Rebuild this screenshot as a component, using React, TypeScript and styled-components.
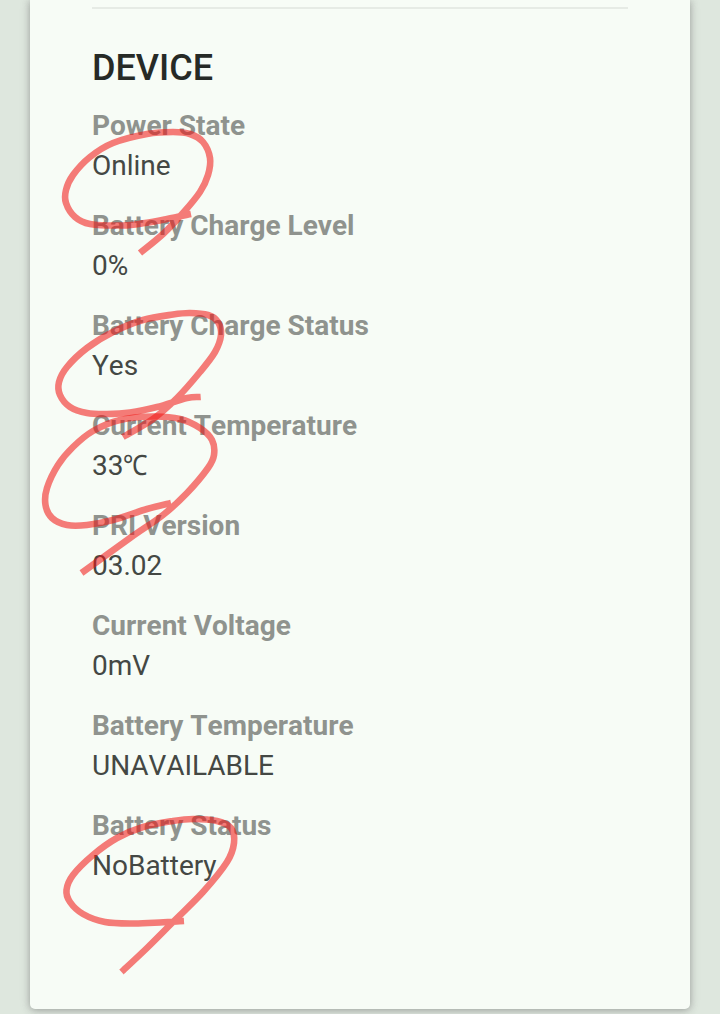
import React from "react";
import styled, { createGlobalStyle } from "styled-components";

const GlobalStyle = createGlobalStyle`
  * { box-sizing: border-box; }
  body {
    margin: 0;
    background: #dee7de;
    font-family: Roboto, "Noto Sans", "Noto Sans CJK SC", sans-serif;
  }
`;

const Page = styled.div`
  position: relative;
  height: 1014px;
  padding: 0 30px 5px;
  overflow: hidden;
`;

const Card = styled.main`
  height: 1009px;
  padding: 7px 62px 0;
  background: #f7fcf6;
  border-radius: 0 0 5px 5px;
  box-shadow: 0 1px 7px rgba(60, 60, 60, 0.34), 0 1px 12px rgba(90, 80, 90, 0.14);
`;

const Divider = styled.hr`
  height: 2px;
  margin: 0;
  border: 0;
  background: #e6ebe5;
`;

const Title = styled.h1`
  margin: 37px 0 16px;
  font-size: 36px;
  line-height: 44px;
  font-weight: 500;
  color: #262a26;
`;

const Details = styled.dl`
  display: flex;
  flex-direction: column;
  gap: 20px;
  margin: 0;
  font-size: 28px;
  line-height: 40px;
  font-kerning: none;
`;

const Label = styled.dt`
  font-weight: 700;
  color: #8f938e;
`;

const Value = styled.dd`
  margin: 0;
  color: #444844;
`;

const Unit = styled.span`
  display: inline-block;
  transform: scaleX(0.88);
  transform-origin: left;
`;

const Markup = styled.svg`
  position: absolute;
  inset: 0;
  pointer-events: none;
`;

type Point = [number, number];

const details: { label: string; value: string; unit?: string }[] = [
  { label: "Power State", value: "Online" },
  { label: "Battery Charge Level", value: "0%" },
  { label: "Battery Charge Status", value: "Yes" },
  { label: "Current Temperature", value: "33", unit: "℃" },
  { label: "PRI Version", value: "03.02" },
  { label: "Current Voltage", value: "0mV" },
  { label: "Battery Temperature", value: "UNAVAILABLE" },
  { label: "Battery Status", value: "NoBattery" },
];

const strokes: Point[][] = [
  [[191, 214], [167, 219], [145, 223], [123, 225.5], [90, 224], [75, 217], [66, 203], [66, 190], [73, 175], [90, 157], [113, 143], [147, 134], [173, 132], [190, 134], [203, 142], [210, 158], [208, 175], [200, 192], [183, 213], [163, 234], [140, 253]],
  [[200.7, 397], [187, 398], [157, 407], [130, 412.5], [107, 414], [87, 413], [70, 407], [60, 395], [59, 382], [67, 367], [87, 348], [113, 332], [143, 320], [173, 314.5], [190, 313], [208, 315], [218, 322], [221, 335], [215, 352], [200, 372], [177, 398], [153, 419], [123, 437]],
  [[171, 503], [147, 509], [113, 520], [87, 525], [67, 525], [52, 518], [45.5, 505], [47, 488], [58, 465], [73, 447], [93, 431], [120, 420], [153, 416.5], [180, 419], [200, 428], [212, 440], [214, 455], [208, 468], [187, 493], [163, 515], [130, 538], [81.5, 573]],
  [[184, 921], [160, 922.5], [133, 923.5], [105, 922], [83, 914], [70, 902], [66.5, 890], [73, 875], [93, 855], [117, 838], [143, 827], [173, 821], [193, 819], [217, 821], [231, 828], [234, 843], [227, 862], [203, 892], [173, 922], [147, 948], [121.5, 972]],
];

// Joins sampled pen positions with a continuous Catmull-Rom curve.
function curve(points: Point[]) {
  let d = `M${points[0][0]} ${points[0][1]}`;
  for (let i = 0; i < points.length - 1; i++) {
    const a = points[Math.max(0, i - 1)];
    const b = points[i];
    const c = points[i + 1];
    const e = points[Math.min(points.length - 1, i + 2)];
    d += `C${b[0] + (c[0] - a[0]) / 6} ${b[1] + (c[1] - a[1]) / 6} ${c[0] - (e[0] - b[0]) / 6} ${c[1] - (e[1] - b[1]) / 6} ${c[0]} ${c[1]}`;
  }
  return d;
}

export default function App() {
  return (
    <>
      <GlobalStyle />
      <Page>
        <Card>
          <Divider />
          <Title>DEVICE</Title>
          <Details>
            {details.map(({ label, value, unit }) => (
              <div key={label}>
                <Label>{label}</Label>
                <Value>
                  {value}
                  {unit && <Unit>{unit}</Unit>}
                </Value>
              </div>
            ))}
          </Details>
        </Card>
        <Markup width="720" height="1014" viewBox="0 0 720 1014" aria-hidden="true">
          {strokes.map((points, i) => (
            <path key={i} d={curve(points)} fill="none" stroke="#f01614" strokeOpacity={0.56} strokeWidth={6.6} strokeLinejoin="round" />
          ))}
        </Markup>
      </Page>
    </>
  );
}
